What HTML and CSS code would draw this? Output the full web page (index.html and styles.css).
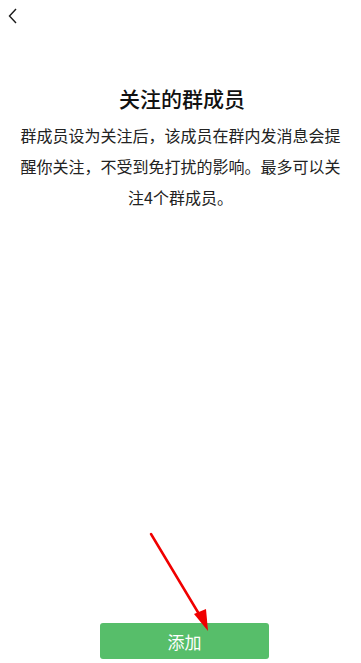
FILE: index.html
```html
<!DOCTYPE html>
<html lang="zh">
<head>
<meta charset="utf-8">
<link rel="stylesheet" href="styles.css">
</head>
<body>
<div class="page">
  <div class="nav">
    <svg class="back" width="12" height="18" viewBox="0 0 12 18"><path d="M9 2 L2.5 9 L9 16" fill="none" stroke="#1a1a1a" stroke-width="1.4"/></svg>
  </div>
  <h1 class="title">关注的群成员</h1>
  <p class="desc">群成员设为关注后，该成员在群内发消息会提醒你关注，不受到免打扰的影响。最多可以关注4个群成员。</p>
  <div class="bottom">
    <button class="add">添加</button>
  </div>
  <svg class="arrow" width="361" height="663" viewBox="0 0 361 663">
    <line x1="151" y1="534" x2="205" y2="624" stroke="#f00000" stroke-width="2.5" stroke-linecap="round"/>
    <polygon points="208,631 194,614 206,609" fill="#f00000"/>
  </svg>
</div>
</body>
</html>
```

FILE: styles.css
```css
html, body {
  margin: 0;
  padding: 0;
  background: #ffffff;
}
body {
  font-family: "Noto Sans CJK SC", "Noto Sans", sans-serif;
  color: #1a1a1a;
}
.page {
  position: relative;
  width: 361px;
  height: 663px;
  display: flex;
  flex-direction: column;
  overflow: hidden;
}
.nav {
  height: 32px;
  padding: 7px 0 0 7px;
  box-sizing: border-box;
}
.back {
  display: block;
}
.title {
  margin: 52px 0 0;
  padding-left: 3px;
  font-size: 21px;
  font-weight: 500;
  line-height: 28px;
  text-align: center;
  color: #111111;
}
.desc {
  margin: 8px 0 0;
  padding: 0 18px;
  font-size: 16px;
  line-height: 31px;
  text-align: center;
  color: #222222;
}
.bottom {
  margin-top: auto;
  padding: 0 0 4px 100px;
}
.add {
  display: block;
  width: 169px;
  height: 36px;
  border: none;
  border-radius: 3px;
  background: #57be6a;
  color: #ffffff;
  font-family: "Noto Sans CJK SC", sans-serif;
  font-size: 17px;
  font-weight: 400;
  padding: 0;
}
.arrow {
  position: absolute;
  left: 0;
  top: 0;
  pointer-events: none;
}
```
